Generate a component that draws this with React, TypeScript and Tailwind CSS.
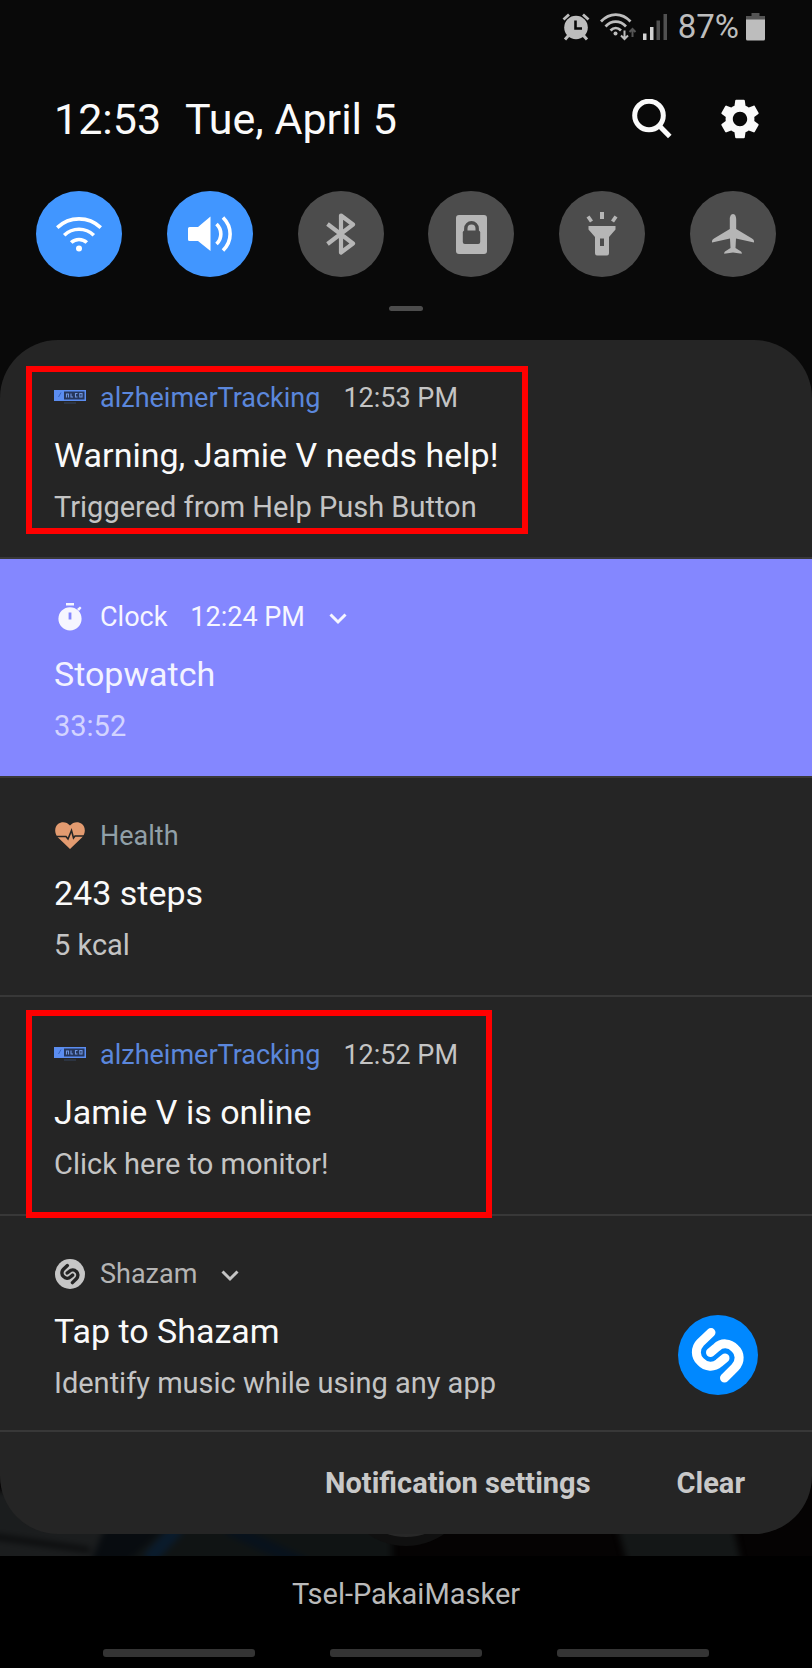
import type { ReactNode } from "react";

function WifiArcs({ className }: { className: string }) {
  return (
    <svg viewBox="0 0 46 36" className={className} fill="none" stroke="currentColor" strokeWidth="3.6" aria-hidden="true">
      <path d="M1.2 11.6C13.5-.1 32.5-.1 44.8 11.6" />
      <path d="M8.2 19.2c8.3-8 21.3-8 29.6 0" />
      <path d="M15.2 26.6c4.2-4.2 11.4-4.2 15.6 0" />
      <circle cx="23" cy="32.6" r="3" fill="currentColor" stroke="none" />
    </svg>
  );
}

function StatusBar() {
  return (
    <div className="flex h-[54px] items-center justify-end pr-[47px] text-[#bdbdbd]">
      <svg viewBox="0 0 28 28" className="h-7 w-7" fill="none" aria-hidden="true">
        <path d="M1.500 6.500 7 1.500M26.500 6.500 21 1.500" stroke="currentColor" strokeWidth="2.800" />
        <path d="M6.500 22.500 3 26.500M21.500 22.500 25 26.500" stroke="currentColor" strokeWidth="3" />
        <circle cx="14" cy="14.500" r="11.800" fill="currentColor" />
        <path d="M13.500 7.500v8h6.500" stroke="#090909" strokeWidth="2.600" />
      </svg>
      <svg viewBox="0 0 37 28" className="ml-[10px] h-7 w-[37px]" fill="none" stroke="currentColor" strokeWidth="2.700" aria-hidden="true">
        <path d="M1 8.500C9.500-.8 22-.8 30.500 8.500" />
        <path d="M5.500 13.500c6-6.500 14.500-6.500 20.500 0" />
        <path d="M10.500 17.500c3.200-3.200 7.300-3.200 10.500 0" />
        <circle cx="15.500" cy="20.500" r="2" fill="currentColor" stroke="none" />
        <path d="M24.500 17.500v8M21 22.500l3.500 3.500 3.500-3.500" strokeWidth="2" />
        <path d="M32.500 24v-8M29.500 19l3-3 3 3" stroke="#555" strokeWidth="2" />
      </svg>
      <svg viewBox="0 0 24 28" className="ml-[6px] h-7 w-6" aria-hidden="true">
        <path d="M0 20.500h3.500V27H0z" fill="#d2d2d2" />
        <path d="M7 14h3.500v13H7z" fill="#d2d2d2" />
        <path d="M13.500 7.500H17V27h-3.500z" fill="#505050" />
        <path d="M20.500 1H24v26h-3.500z" fill="#505050" />
      </svg>
      <span className="ml-[11px] text-[33px] leading-9">87%</span>
      <svg viewBox="0 0 19 28" className="ml-[7px] h-7 w-[19px]" aria-hidden="true">
        <path d="M5.500 0h8v3H19v4H0V3h5.500z" fill="#555" />
        <path d="M0 6.500h19v19.500q0 1.500-1.500 1.500h-16Q0 27.500 0 26z" fill="currentColor" />
      </svg>
    </div>
  );
}

function Header() {
  return (
    <header className="flex h-[126px] items-center pt-[3px] pr-[52px] pl-[54px] text-[#fafafa]">
      <h1 className="flex flex-1 gap-6 text-[43px] leading-[50px] font-normal">
        <span>12:53</span>
        <span>Tue, April 5</span>
      </h1>
      <button type="button" aria-label="Search" className="mr-12">
        <svg viewBox="0 0 40 40" className="h-10 w-10" fill="none" stroke="currentColor" aria-hidden="true">
          <circle cx="17" cy="16.500" r="14.300" strokeWidth="5" />
          <path d="M27 26.500 37.800 37.500" strokeWidth="5" />
        </svg>
      </button>
      <button type="button" aria-label="Settings">
        <svg viewBox="2 2 20 20" className="h-10 w-10" fill="currentColor" aria-hidden="true">
          <path d="M19.140 12.940c.04-.3.060-.61.060-.94 0-.32-.02-.64-.07-.94l2.030-1.580c.18-.14.230-.41.120-.61l-1.920-3.320c-.12-.22-.37-.29-.59-.22l-2.390.96c-.5-.38-1.030-.7-1.620-.94l-.36-2.540c-.04-.24-.24-.41-.48-.41h-3.840c-.24 0-.43.17-.47.41l-.36 2.540c-.59.24-1.130.57-1.620.94l-2.390-.96c-.22-.08-.47 0-.59.22L2.740 8.870c-.12.210-.08.470.12.610l2.030 1.580c-.05.300-.09.630-.09.940s.02.640.07.940l-2.030 1.580c-.18.140-.23.410-.12.610l1.920 3.320c.12.220.37.290.59.220l2.390-.96c.5.380 1.030.700 1.620.940l.36 2.540c.05.240.24.410.48.410h3.840c.24 0 .44-.17.470-.41l.36-2.540c.59-.24 1.130-.56 1.620-.94l2.390.96c.22.080.47 0 .59-.22l1.920-3.320c.12-.22.070-.47-.12-.61l-2.010-1.580zM12 15.600c-1.980 0-3.600-1.620-3.600-3.600s1.620-3.600 3.600-3.600 3.600 1.620 3.600 3.600-1.620 3.600-3.600 3.600z" />
        </svg>
      </button>
    </header>
  );
}

function Toggle({ label, on = false, children }: { label: string; on?: boolean; children: ReactNode }) {
  return (
    <button
      type="button"
      aria-label={label}
      aria-pressed={on}
      className={`flex h-[86px] w-[86px] items-center justify-center rounded-full ${on ? "bg-[#4196ff] text-white" : "bg-[#4c4c4c] text-[#b6b6b6]"}`}
    >
      {children}
    </button>
  );
}

function QuickSettings() {
  return (
    <section aria-label="Quick settings" className="px-9 pt-[11px]">
      <div className="flex justify-between">
        <Toggle label="Wi-Fi" on>
          <WifiArcs className="h-9 w-[46px]" />
        </Toggle>
        <Toggle label="Sound" on>
          <svg viewBox="0 0 44 36" className="h-9 w-11" fill="currentColor" aria-hidden="true">
            <path d="M1.500 11H10L22.500.500V35L10 25H1.500Q0 25 0 23.500v-11Q0 11 1.500 11z" />
            <path d="M28.500 8c5.800 5.500 5.800 14.500 0 20M35 1.500c9.500 9.500 9.500 23.500 0 33" fill="none" stroke="currentColor" strokeWidth="3.600" />
          </svg>
        </Toggle>
        <Toggle label="Bluetooth">
          <svg viewBox="0 0 30 42" className="h-[42px] w-[30px]" fill="none" stroke="currentColor" strokeWidth="4.200" strokeLinejoin="round" aria-hidden="true">
            <path d="M1.500 11 27 30.500 15 39.500v-37L27 11.500 1.500 31" />
          </svg>
        </Toggle>
        <Toggle label="Lock orientation">
          <svg viewBox="0 0 31 39" className="h-[39px] w-[31px]" aria-hidden="true">
            <rect width="31" height="39" rx="3" fill="currentColor" />
            <path d="M9.800 17v-3.500a5.700 5.700 0 0 1 11.400 0V17" fill="none" stroke="#4c4c4c" strokeWidth="3.400" />
            <rect x="6.800" y="15.500" width="17.400" height="13.500" rx="2" fill="#4c4c4c" />
          </svg>
        </Toggle>
        <Toggle label="Flashlight">
          <svg viewBox="0 0 32 44" className="h-11 w-8" fill="currentColor" aria-hidden="true">
            <path d="M14 0h4v7h-4zM.500 5.500l3-2 3.500 5-3 2zM31.500 5.500l-3-2-3.500 5 3 2z" />
            <path fillRule="evenodd" d="M2.500 14h27v3.500L23 25v16q0 2.500-2.500 2.500h-9Q9 43.500 9 41V25l-6.500-7.500zM14 26.500v7.500h4v-7.500z" />
          </svg>
        </Toggle>
        <Toggle label="Airplane mode">
          <svg viewBox="0 0 42 40" className="h-10 w-[42px]" fill="currentColor" aria-hidden="true">
            <path d="M21 0c2.300 0 3.200 3 3.200 5.500V15L40 24.500q2 1.200 2 2.500v1.500L24 24.500l-.5 9.500 5.500 3.500q1 .8.800 2.200L21 38.500l-8.800 1.200q-.2-1.400.8-2.200l5.500-3.500-.5-9.500L0 28.500V27q0-1.300 2-2.500L17.800 15V5.500C17.800 3 18.700 0 21 0z" />
          </svg>
        </Toggle>
      </div>
      <div className="mx-auto mt-[29px] h-[5px] w-[34px] rounded-full bg-[#4c4c4c]" />
    </section>
  );
}

function TrackerLogo() {
  return (
    <svg viewBox="0 0 32 16" className="h-4 w-8" aria-hidden="true">
      <rect y="0" width="32" height="11" fill="#5b8df0" />
      <rect x="10" y="1.500" width="20.500" height="8" fill="#26375c" />
      <path d="M4.500 7 7 2.500" stroke="#3563bd" strokeWidth="1" />
      <path d="M12.500 7.500V4h2v3.500M17 3.500V7h2M23.500 3.500h-2V7h2M25.800 3.500h2.200V7h-2.200z" fill="none" stroke="#7096e0" strokeWidth="1.100" />
      <path d="M10 13h12" stroke="#34445f" strokeWidth="1" />
    </svg>
  );
}

function ShazamMark({ className, disc, mark }: { className: string; disc: string; mark: string }) {
  return (
    <svg viewBox="0 0 80 80" className={className} fill="none" strokeLinecap="round" aria-hidden="true">
      <circle cx="40" cy="40" r="40" fill={disc} />
      <path d="M33 17.500 22.500 27.500C16.500 33.500 17.500 42 22.500 46.500 28 52.500 36 52.500 41 48L47 43" stroke={mark} strokeWidth="9" />
      <path d="M46.500 63 57 52.500C63 46.500 62 38 57 33.500 51.500 27.500 43.500 27.500 38.500 32.500L32.500 37.500" stroke={mark} strokeWidth="9" />
    </svg>
  );
}

function Chevron() {
  return (
    <svg viewBox="0 0 18 12" className="mt-1 ml-6 h-3 w-[18px]" fill="none" stroke="currentColor" strokeWidth="3" aria-hidden="true">
      <path d="M1.500 1.500 9 9l7.500-7.500" />
    </svg>
  );
}

type NotificationProps = {
  icon: ReactNode;
  app: string;
  appColor: string;
  time?: string;
  chevron?: boolean;
  title: string;
  text: string;
  tone?: "dark" | "violet";
  mark?: ReactNode;
  action?: ReactNode;
};

function Notification({ icon, app, appColor, time, chevron, title, text, tone = "dark", mark, action }: NotificationProps) {
  const violet = tone === "violet";
  return (
    <li
      className={`relative flex items-end justify-between border-b-2 border-[#383838] pt-[42px] pr-[54px] pb-8 pl-[54px] last:pb-[29px] ${violet ? "bg-[#8487ff]" : ""}`}
    >
      <div>
        <div className={`flex h-8 items-center text-[27px] leading-8 ${violet ? "text-[#f6f6ff]" : "text-[#c4c4c4]"}`}>
          <span className="flex w-[46px]">{icon}</span>
          <span className={appColor}>{app}</span>
          {time && <time className="ml-[23px]">{time}</time>}
          {chevron && <Chevron />}
        </div>
        <h2 className={`mt-[21px] text-[34px] leading-10 font-normal ${violet ? "text-[#f3f3ff]" : "text-[#fafafa]"}`}>{title}</h2>
        <p className={`mt-[14px] text-[29px] leading-9 ${violet ? "text-[#d3d4ff]" : "text-[#c4c4c4]"}`}>{text}</p>
      </div>
      {action}
      {mark}
    </li>
  );
}

function Notifications() {
  return (
    <section aria-label="Notifications" className="relative rounded-[58px] bg-[#252525]">
      <ul>
        <Notification
          icon={<TrackerLogo />}
          app="alzheimerTracking"
          appColor="text-[#5b87dc]"
          time="12:53 PM"
          title="Warning, Jamie V needs help!"
          text="Triggered from Help Push Button"
          mark={<div className="absolute top-[26px] left-[26px] h-[168px] w-[502px] border-6 border-[#ff0000]" />}
        />
        <Notification
          icon={
            <svg viewBox="0 0 24 28" className="ml-1 h-7 w-6" fill="currentColor" aria-hidden="true">
              <path d="M8 0h8v2.500H8z" />
              <path d="m19 6 3-2.500L23.500 5 21 8z" />
              <path fillRule="evenodd" d="M12 4.200a11.600 11.600 0 1 0 0 23.200 11.600 11.600 0 0 0 0-23.200zM10.600 9.500h2.800v7h-2.800z" />
            </svg>
          }
          app="Clock"
          appColor="text-[#f6f6ff]"
          time="12:24 PM"
          chevron
          title="Stopwatch"
          text="33:52"
          tone="violet"
        />
        <Notification
          icon={
            <svg viewBox="0 0 30 28" className="ml-px h-7 w-[30px]" aria-hidden="true">
              <path d="M15 27 3 15.500C-1 11-.5 5 3 2c4-3 9-2 12 1.500C18 0 23-1 27 2c3.500 3 4 9 0 13.500z" fill="#e39b70" />
              <path d="M1 14.500h10l2 2.500 3.500-8.500 2 7.500 1.500-2h9" fill="none" stroke="#252525" strokeWidth="1.600" />
            </svg>
          }
          app="Health"
          appColor="text-[#91a0a8]"
          title="243 steps"
          text="5 kcal"
        />
        <Notification
          icon={<TrackerLogo />}
          app="alzheimerTracking"
          appColor="text-[#5b87dc]"
          time="12:52 PM"
          title="Jamie V is online"
          text="Click here to monitor!"
          mark={<div className="absolute top-[13px] left-[26px] z-10 h-[208px] w-[466px] border-6 border-[#ff0000]" />}
        />
        <Notification
          icon={<ShazamMark className="ml-px h-[30px] w-[30px]" disc="#c6c6c6" mark="#252525" />}
          app="Shazam"
          appColor="text-[#b4b4b4]"
          chevron
          title="Tap to Shazam"
          text="Identify music while using any app"
          action={<ShazamMark className="mb-[6px] h-20 w-20" disc="#0088ff" mark="#ffffff" />}
        />
      </ul>
      <div className="flex h-[102px] items-center justify-end gap-[86px] pr-[67px] text-[29px] leading-9 font-bold text-[#c9c9c9]">
        <button type="button">Notification settings</button>
        <button type="button">Clear</button>
      </div>
    </section>
  );
}

function Wallpaper() {
  return (
    <svg viewBox="0 0 812 100" preserveAspectRatio="none" className="absolute bottom-0 left-0 h-[100px] w-full" aria-hidden="true">
      <defs>
        <filter id="soft" x="0" y="0" width="812" height="100" filterUnits="userSpaceOnUse" colorInterpolationFilters="sRGB">
          <feGaussianBlur stdDeviation="3" />
        </filter>
      </defs>
      <rect width="812" height="100" fill="#050303" />
      <g filter="url(#soft)">
        <path d="M-10 35H60L110 76 88 110H-10z" fill="#1b1d1e" />
        <path d="M-10 80 90 94" stroke="#090a0b" strokeWidth="5" />
        <path d="M105 70H392V110H90z" fill="#101414" />
        <path d="M105 72H165L120 112H88z" fill="#080c10" />
        <path d="m148 104 30-32" stroke="#0a1b2c" strokeWidth="14" />
        <path d="m228 72 76 36" stroke="#08121c" strokeWidth="13" />
        <path d="M617 70H733L742 110H628z" fill="#141717" />
      </g>
      <circle cx="406" cy="24" r="66" fill="#101010" />
      <circle cx="406" cy="24" r="57" fill="#282828" />
    </svg>
  );
}

export default function App() {
  return (
    <main className="min-h-screen bg-black font-[Roboto,sans-serif]">
      <div className="relative bg-[#090909] pb-[22px]">
        <Wallpaper />
        <div className="relative">
          <StatusBar />
          <Header />
          <QuickSettings />
          <div className="h-[29px]" />
          <Notifications />
        </div>
      </div>
      <footer>
        <p className="pt-5 text-center text-[29px] leading-9 text-[#bababa]">Tsel-PakaiMasker</p>
        <div className="flex justify-center gap-[75px] pt-[37px] pb-3">
          <button type="button" aria-label="Recents" className="h-2 w-[152px] rounded-[3px] bg-[#343434]" />
          <button type="button" aria-label="Home" className="h-2 w-[152px] rounded-[3px] bg-[#343434]" />
          <button type="button" aria-label="Back" className="h-2 w-[152px] rounded-[3px] bg-[#343434]" />
        </div>
      </footer>
    </main>
  );
}
